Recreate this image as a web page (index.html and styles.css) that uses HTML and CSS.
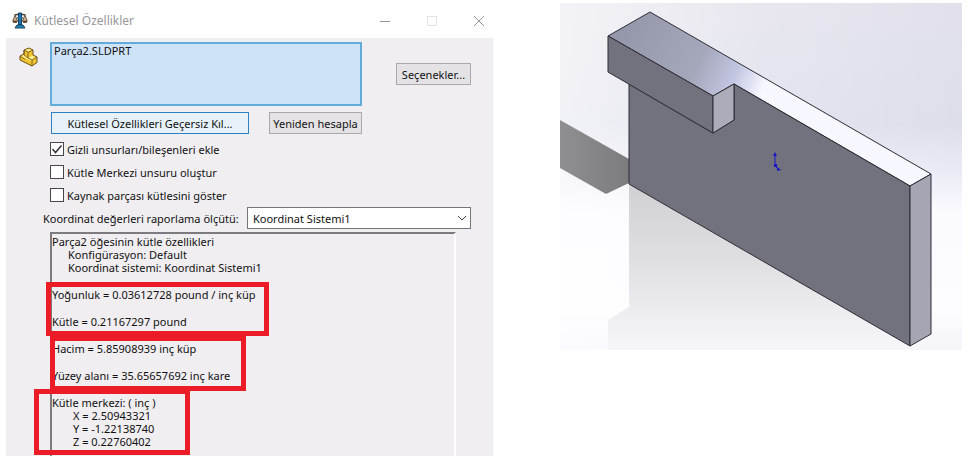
FILE: index.html
```html
<!DOCTYPE html>
<html lang="tr">
<head>
<meta charset="utf-8">
<meta name="viewport" content="width=device-width, initial-scale=1">
<title>Kütlesel Özellikler</title>
<link rel="stylesheet" href="styles.css">
</head>
<body>
<main class="page">
  <section class="dialog">
    <header class="titlebar">
      <svg class="title-icon" viewBox="0 0 16 17" aria-hidden="true">
        <path d="M2.500 3 8 2l5.500 1" fill="none" stroke="#4b4038" stroke-width="1.500"/>
        <path d="M3 3 .8 9h4.700zM13 3l-2.500 6h4.700z" fill="#c9b79d" stroke="#75583c"/>
        <path d="M.3 9h5.500L4.500 11h-3zM10.200 9h5.500l-1.300 2h-3z" fill="#6b4a32"/>
        <path d="M6.500 1h3v4l1 1-1 1v6h-3V7l-1-1 1-1z" fill="#1d78b4" stroke="#173f5d"/>
        <path d="M5 13h6l2 3H3z" fill="#2289bd" stroke="#173f5d"/>
      </svg>
      <h1 class="title">Kütlesel Özellikler</h1>
      <div class="window-buttons">
        <button class="window-button" type="button" aria-label="Simge durumuna küçült"><svg viewBox="0 0 12 12"><path d="M1 6.500h10" stroke="#98959a"/></svg></button>
        <button class="window-button" type="button" aria-label="Ekranı kapla" disabled><svg viewBox="0 0 12 12"><path d="M1.500 1.500h9v9h-9z" stroke="#e4e0e5"/></svg></button>
        <button class="window-button" type="button" aria-label="Kapat"><svg viewBox="0 0 12 12"><path d="m1 1 10 10M11 1 1 11" stroke="#98959a"/></svg></button>
      </div>
    </header>
    <form class="content">
      <div class="selection-row">
        <svg class="part-icon" viewBox="0 0 19 20" aria-hidden="true">
          <path d="m1 9 4-2V3l5-2 4 2v5l4 2v5.500L13 19 1 13z" fill="#efc32c" stroke="#6b511a" stroke-linejoin="round"/>
          <path d="m5.800 3.200 4.200-1.500 3.200 1.500L9.500 5zM9.500 10.500 13 8.500l4.200 2-4.200 2.300zM2 9.200l3-1.400 4 3 4 2.500v1.200z" fill="#ffec85"/>
          <path d="M5 3v5l4 3V5.300L5 3M9 5.300 14 3M9 11l4 2 5-3M13 13v6M1 9l5 3.500" fill="none" stroke="#6b511a" stroke-width=".8"/>
        </svg>
        <textarea class="selection" aria-label="Seçili parça" readonly>Parça2.SLDPRT</textarea>
        <button class="button options" type="button">Seçenekler...</button>
      </div>
      <div class="actions">
        <button class="button button-default" type="button">Kütlesel Özellikleri Geçersiz Kıl...</button>
        <button class="button" type="button">Yeniden hesapla</button>
      </div>
      <div class="checks">
        <label class="check"><input type="checkbox" checked><svg class="tick" viewBox="0 0 14 14" aria-hidden="true"><path d="m2.500 7 3 3.500 6-7"/></svg>Gizli unsurları/bileşenleri ekle</label>
        <label class="check"><input type="checkbox">Kütle Merkezi unsuru oluştur</label>
        <label class="check"><input type="checkbox">Kaynak parçası kütlesini göster</label>
      </div>
      <div class="coordinate-row">
        <label class="coordinate-label" for="coordinate">Koordinat değerleri raporlama ölçütü:</label>
        <div class="select-wrap">
          <select id="coordinate"><option>Koordinat Sistemi1</option></select>
          <svg class="chevron" viewBox="0 0 10 6" aria-hidden="true"><path d="m1 1 4 4 4-4"/></svg>
        </div>
      </div>
      <section class="report">
        <div>
          <p>Parça2 öğesinin kütle özellikleri</p>
          <p class="detail">Konfigürasyon: Default</p>
          <p class="detail">Koordinat sistemi: Koordinat Sistemi1</p>
        </div>
        <div class="group mass">
          <p>Yoğunluk = 0.03612728 pound / inç küp</p>
          <p>Kütle = 0.21167297 pound</p>
        </div>
        <div class="group volume">
          <p>Hacim = 5.85908939 inç küp</p>
          <p>Yüzey alanı = 35.65657692 inç kare</p>
        </div>
        <div class="group center">
          <p>Kütle merkezi: ( inç )</p>
          <p class="axis">X = 2.50943321</p>
          <p class="axis">Y = -1.22138740</p>
          <p class="axis">Z = 0.22760402</p>
        </div>
      </section>
    </form>
  </section>
  <figure class="model">
    <svg viewBox="0 0 402 347" role="img" aria-label="L biçimli parçanın üç boyutlu görünümü">
      <defs>
        <linearGradient id="sky" x1="0" y1="0" x2="0" y2="1">
          <stop offset="0" stop-color="#e2e1eb"/><stop offset=".35" stop-color="#dcdeea"/><stop offset=".48" stop-color="#eaeaf5"/><stop offset=".6" stop-color="#fafaff"/><stop offset=".88" stop-color="#fdfdff"/><stop offset="1" stop-color="#f5f5fa"/>
        </linearGradient>
        <linearGradient id="haze" x1="0" y1="0" x2="1" y2="0">
          <stop offset="0" stop-color="#fff" stop-opacity=".6"/><stop offset=".5" stop-color="#fff" stop-opacity=".2"/><stop offset="1" stop-color="#fff" stop-opacity="0"/>
        </linearGradient>
        <linearGradient id="reflection" x1="0" y1="181" x2="0" y2="347" gradientUnits="userSpaceOnUse">
          <stop offset="0" stop-color="#d0d0d3"/><stop offset=".5" stop-color="#e1e1e4"/><stop offset="1" stop-color="#f7f7fb"/>
        </linearGradient>
        <linearGradient id="top" x1="60" y1="30" x2="201" y2="90" gradientUnits="userSpaceOnUse">
          <stop offset="0" stop-color="#9496aa"/><stop offset=".55" stop-color="#a5a7bb"/><stop offset=".8" stop-color="#c3c6e2"/><stop offset="1" stop-color="#f6f7ff"/>
        </linearGradient>
        <linearGradient id="shadow" x1="0" y1="0" x2="1" y2="0">
          <stop offset="0" stop-color="#8f8f92"/><stop offset="1" stop-color="#7c7c7e"/>
        </linearGradient>
      </defs>
      <path d="M0 0h402v347H0z" fill="url(#sky)"/>
      <path d="M0 0h402v347H0z" fill="url(#haze)"/>
      <path d="M69 181 350 343v4H48v-30l21-13z" fill="url(#reflection)"/>
      <path d="m0 117 69 39v24l-23 11L0 165z" fill="url(#shadow)"/>
      <g stroke="#2d2c34" stroke-linejoin="round">
        <path d="m48 33 42-24 281 162-21 12L174 81l-21 12z" fill="url(#top)"/>
        <path d="m69 81 84 49 21-13V81l176 102v160L69 181z" fill="#72727e"/>
        <path d="m48 33 105 60v37L48 69z" fill="#72727e"/>
        <path d="m153 93 21-12v36l-21 13z" fill="#abadba"/>
        <path d="m350 183 21-12v160l-21 12z" fill="#a5a5b3"/>
      </g>
      <path d="M215 152v11l3 3" fill="none" stroke="#1a15c9"/>
      <path d="m215 149-2 4h4zM221 167l-4-3v4zM214 161h3v3h-3z" fill="#1a15c9"/>
    </svg>
  </figure>
</main>
</body>
</html>
```
FILE: styles.css
```css
*, *::after { box-sizing: border-box; }
body { margin: 0; background: #fff; color: #111; font: 11px/13px "Noto Sans", "Open Sans", sans-serif; }
p, h1, figure { margin: 0; }
button, select, textarea { font: inherit; color: inherit; border-radius: 0; }
.page { display: grid; grid-template-columns: 488fr 402fr; gap: 66px; align-items: start; padding: 3px 11px 7px 6px; }
.titlebar { display: flex; align-items: center; height: 35px; padding: 0 7px 0 6px; }
.title-icon { width: 16px; height: 17px; margin-right: 6px; }
.title { flex: 1; font-size: 12px; font-weight: 400; color: #98969a; }
.window-buttons { display: flex; gap: 31px; }
.window-button { width: 16px; height: 16px; padding: 2px; border: 0; background: none; }
.window-button svg { display: block; width: 12px; height: 12px; fill: none; }
.content { background: #f0eef1; padding: 4px 22px 0 13px; border-right: 1px solid #faf9fb; }
.selection-row { display: flex; align-items: flex-start; }
.part-icon { width: 19px; height: 20px; margin: 5px 12px 0 0; }
.selection { flex: 0 1 312px; min-width: 0; height: 64px; padding: 0 2px; border: 2px solid #62acdc; background: #cfe3f8; resize: none; outline: 0; }
.button { height: 22px; padding: 0 2px; border: 1px solid #aaa8ac; background: #e4e2e5; white-space: nowrap; }
.options { margin: 21px 0 0 auto; min-width: 75px; }
.actions { display: flex; gap: 20px; padding: 6px 0 0 32px; }
.button-default { border-color: #2e80c4; background: #e6f1fa; width: 198px; }
.actions .button:last-child { width: 93px; }
.checks { display: grid; gap: 9px; padding: 8px 0 0 31px; }
.check { position: relative; display: flex; align-items: center; gap: 3px; height: 14px; }
.check input { appearance: none; width: 14px; height: 14px; margin: 0; border: 1px solid #48464a; background: #fff; }
.tick { position: absolute; left: 0; top: 0; width: 14px; height: 14px; fill: none; stroke: #353337; stroke-width: 1.500; pointer-events: none; }
.coordinate-row { display: flex; align-items: center; gap: 4px; margin-top: 5px; padding-left: 24px; white-space: nowrap; }
.coordinate-label { min-width: 200px; }
.select-wrap { position: relative; flex: 1; }
select { display: block; appearance: none; width: 100%; height: 22px; padding: 0 20px 0 5px; border: 1px solid #77757a; background: #fff; }
.chevron { position: absolute; right: 4px; top: 8px; width: 10px; height: 6px; fill: none; stroke: #444; pointer-events: none; }
.report { display: grid; gap: 14px; margin: 3px 15px 0 31px; padding: 1px 0 8px; border: solid #7d7b80; border-width: 2px 2px 0 2px; border-right-color: #fff; white-space: nowrap; }
.detail { padding-left: 16px; }
.axis { padding-left: 21px; }
.group { position: relative; }
.mass, .volume { display: grid; gap: 14px; }
.group::after { content: ""; position: absolute; border: 5px solid #ec1c27; pointer-events: none; }
.mass::after { left: -6px; top: -6px; width: 223px; height: 54px; }
.volume::after { left: -2px; top: -6px; width: 196px; height: 55px; }
.center::after { left: -18px; top: -7px; width: 156px; height: 66px; }
.model svg { display: block; width: 100%; height: auto; }
```
